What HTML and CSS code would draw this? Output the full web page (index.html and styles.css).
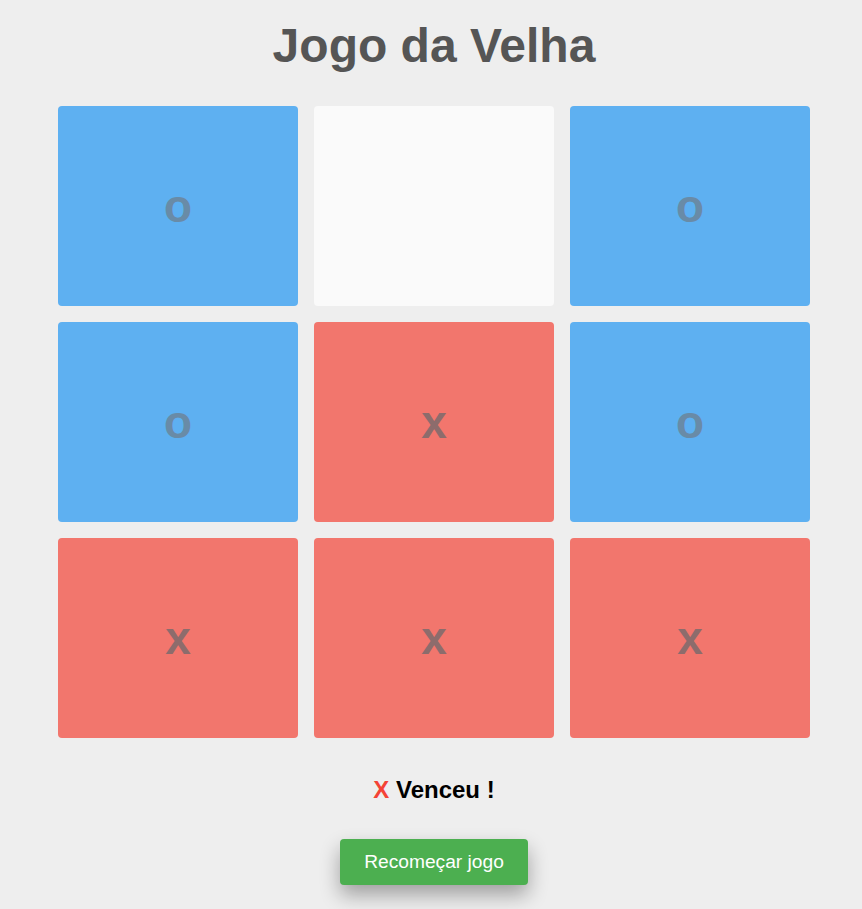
FILE: index.html
```html
<!DOCTYPE html>
<html lang="pt-BR">
<head>
<meta charset="utf-8">
<title>Jogo da Velha</title>
<link rel="stylesheet" href="styles.css">
</head>
<body>
<main class="game">
  <h1 class="title">Jogo da Velha</h1>
  <div class="board">
    <div class="cell cell-o"><span class="mark">o</span></div>
    <div class="cell cell-empty"></div>
    <div class="cell cell-o"><span class="mark">o</span></div>
    <div class="cell cell-o"><span class="mark">o</span></div>
    <div class="cell cell-x"><span class="mark">x</span></div>
    <div class="cell cell-o"><span class="mark">o</span></div>
    <div class="cell cell-x"><span class="mark">x</span></div>
    <div class="cell cell-x"><span class="mark">x</span></div>
    <div class="cell cell-x"><span class="mark">x</span></div>
  </div>
  <p class="result"><span class="winner">X</span> Venceu !</p>
  <button class="restart" type="button">Recomeçar jogo</button>
</main>
</body>
</html>
```
FILE: styles.css
```css
html, body {
  margin: 0;
  padding: 0;
  background: #eeeeee;
}
body {
  font-family: "Liberation Sans", Arial, sans-serif;
  padding: 18px 0 0 6px;
  height: 909px;
  box-sizing: border-box;
  overflow: hidden;
}
.game {
  display: flex;
  flex-direction: column;
  align-items: center;
}
.title {
  margin: 0 0 33px;
  font-size: 48px;
  font-weight: bold;
  color: #555555;
  line-height: normal;
}
.board {
  display: grid;
  grid-template-columns: repeat(3, 240px);
  grid-template-rows: repeat(3, 200px);
  gap: 16px;
}
.cell {
  border-radius: 4px;
  display: flex;
  align-items: center;
  justify-content: center;
}
.cell-empty { background: #fafafa; }
.cell-o { background: #5eb0f1; }
.cell-x { background: #f2766d; }
.mark {
  font-size: 46px;
  font-weight: bold;
  line-height: normal;
  margin-top: -1px;
}
.cell-o .mark { color: #698ba7; }
.cell-x .mark { color: #8d6c6c; }
.result {
  margin: 38px 0 0;
  font-size: 24px;
  font-weight: bold;
  color: #000000;
  line-height: normal;
}
.winner { color: #f44336; }
.restart {
  margin-top: 35px;
  font-family: "Liberation Sans", Arial, sans-serif;
  font-size: 19.2px;
  line-height: 22px;
  color: #ffffff;
  background: #4caf50;
  border: none;
  border-radius: 4px;
  padding: 12px 24px;
  box-shadow: 0 10px 20px rgba(0, 0, 0, 0.33);
  cursor: pointer;
}
```
